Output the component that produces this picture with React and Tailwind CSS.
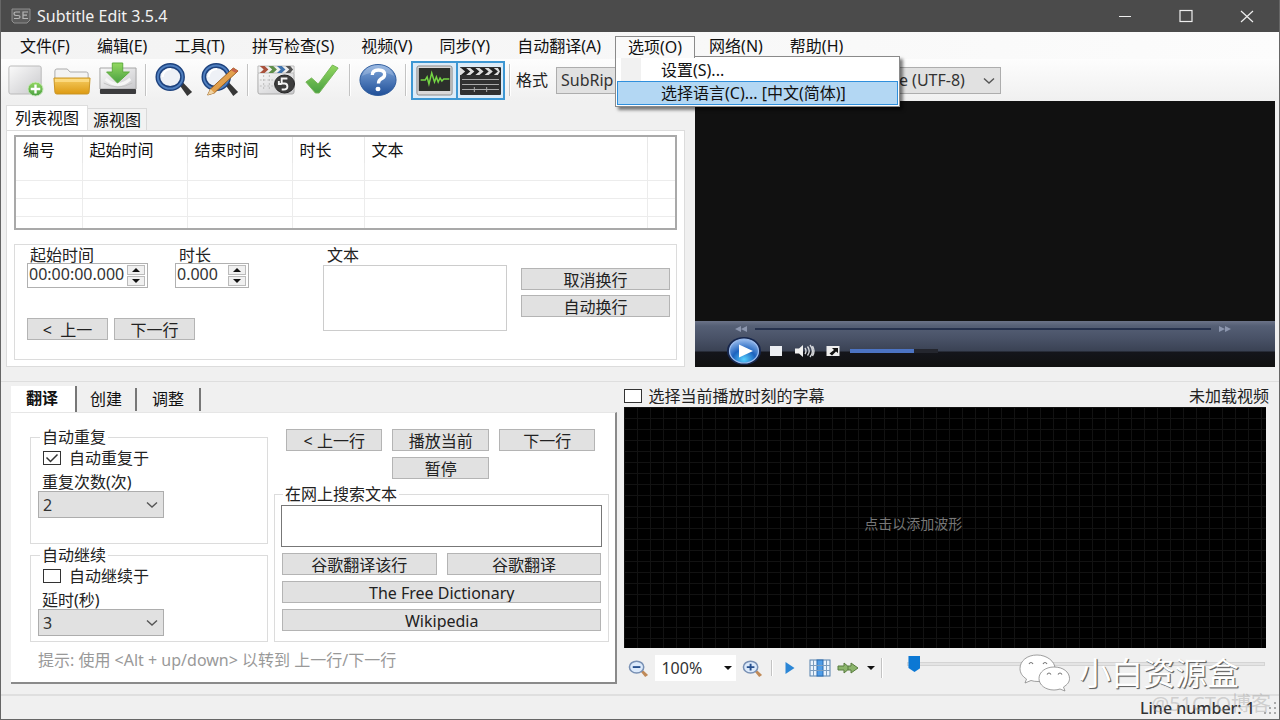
import React, { useState } from 'react';

const menus = ['文件(F)', '编辑(E)', '工具(T)', '拼写检查(S)', '视频(V)', '同步(Y)', '自动翻译(A)', '选项(O)', '网络(N)', '帮助(H)'];

const Gradients = () => (
    <svg className="absolute w-0 h-0" aria-hidden="true">
        <defs>
            <linearGradient id="paper" x1="0" y1="0" x2="1" y2="1">
                <stop offset="0" stopColor="#fafafa" />
                <stop offset="1" stopColor="#c9c9cc" />
            </linearGradient>
            <linearGradient id="gold" x1="0" y1="0" x2="0" y2="1">
                <stop offset="0" stopColor="#f6cd62" />
                <stop offset="1" stopColor="#dd9a12" />
            </linearGradient>
            <linearGradient id="green" x1="0" y1="0" x2="0" y2="1">
                <stop offset="0" stopColor="#93d860" />
                <stop offset="1" stopColor="#4aa042" />
            </linearGradient>
            <linearGradient id="blue" x1="0" y1="0" x2="0" y2="1">
                <stop offset="0" stopColor="#84aadd" />
                <stop offset="1" stopColor="#1f4f98" />
            </linearGradient>
            <radialGradient id="orb" cx="0.5" cy="0.85" r="0.8">
                <stop offset="0" stopColor="#56d0ff" />
                <stop offset="0.5" stopColor="#1c62be" />
                <stop offset="1" stopColor="#8fb4e8" />
            </radialGradient>
        </defs>
    </svg>
);

const Svg = ({ children, box = '0 0 40 36', className = 'w-full h-9' }) => (
    <svg viewBox={box} className={className} preserveAspectRatio="none" aria-hidden="true">{children}</svg>
);

const NewIcon = () => (
    <Svg>
        <rect x="2" y="4" width="34" height="28" rx="2" fill="url(#paper)" stroke="#b9b9b9" />
        <ellipse cx="30" cy="27" rx="8" ry="7" fill="url(#green)" stroke="#cfe8c4" />
        <path d="M30 22.500v9M25 27h10" stroke="#fff" strokeWidth="2.500" />
    </Svg>
);

const OpenIcon = () => (
    <Svg>
        <path d="M2 15V9q0-2 2-2h11l3 3h17q2 0 2 2v8H2z" fill="#f3f3f3" stroke="#aaa" />
        <path d="M1 16h38l-1 14q0 2-2 2H4q-2 0-2-2z" fill="url(#gold)" stroke="#c99424" />
        <path d="M2 17h36v3H2z" fill="#ffe391" opacity="0.7" />
    </Svg>
);

const SaveIcon = () => (
    <Svg>
        <path d="M1 6h38v21H1z" fill="url(#paper)" stroke="#a5a5a5" />
        <path d="M7 17q13 11 26 0" fill="none" stroke="#f6f6f6" strokeWidth="3" />
        <path d="M5 21q15 8 30 0" fill="none" stroke="#c2c2c2" />
        <rect x="1" y="27" width="38" height="5" rx="1" fill="#3c3c3e" />
        <path d="M14 1h11v9h7L19.500 21 8 10h6z" fill="url(#green)" stroke="#5cab3c" />
    </Svg>
);

const Lens = () => (
    <>
        <path d="M25 22l4-2 10 10-5 4z" fill="#373737" />
        <ellipse cx="16" cy="15" rx="13" ry="11.500" fill="#eef1f6" stroke="#1d427e" strokeWidth="5" />
        <ellipse cx="16" cy="15" rx="13" ry="11.500" fill="none" stroke="#4f7fbf" strokeWidth="2" />
        <path d="M8 15q1-8 9-8" fill="none" stroke="#fff" strokeWidth="2" />
    </>
);

const FindIcon = () => <Svg><Lens /></Svg>;

const ReplaceIcon = () => (
    <Svg>
        <Lens />
        <path d="M10 27L34 6l5 3-25 22-7 2z" fill="#e2a04c" stroke="#9b6220" />
        <path d="M34 6l5 3-2.500 2-5-3z" fill="#c8634a" />
        <path d="M7 33l3-6 4 4z" fill="#f0d4a5" />
    </Svg>
);

const SyncIcon = () => (
    <Svg>
        <rect x="1" y="10" width="38" height="22" rx="2" fill="url(#paper)" stroke="#aaa" />
        <path d="M1 4h38v7H1z" fill="#f0f0f0" stroke="#bbb" />
        <path d="M3 4h5l4 3.500L8 11H3l4-3.500z" fill="#a9513b" />
        <path d="M12 4h5l4 3.500-4 3.500h-5l4-3.500z" fill="#5f8f4a" />
        <path d="M21 4h5l4 3.500-4 3.500h-5l4-3.500z" fill="#3f73ae" />
        <path d="M30 4h5l3 3.500-3 3.500h-5l4-3.500z" fill="#555" />
        <path d="M7 13v16M13 13v16M3 18h17M3 24h15" stroke="#bdbdbd" strokeDasharray="2 2" />
        <ellipse cx="29" cy="22" rx="10.500" ry="9" fill="#3d3d3d" stroke="#222" />
        <path d="M32 16.500h-6v5h3q3 0 3 3t-4 3h-2M23 19v3h3" fill="none" stroke="#f4f4f4" strokeWidth="2" />
    </Svg>
);

const CheckIcon = () => (
    <Svg>
        <path d="M3 20l6-4 7 6L31 3l6 3-20 25h-4z" fill="url(#green)" stroke="#74b555" />
    </Svg>
);

const HelpIcon = () => (
    <Svg>
        <ellipse cx="20" cy="18" rx="19" ry="15.500" fill="url(#blue)" stroke="#2e5c9c" />
        <path d="M3 14q4-11 17-11t17 11q-16-8-34 0z" fill="#fff" opacity="0.2" />
        <path d="M14 13q0-5 6.500-5t6.500 4.500q0 3-4 4.500-2.500 1.500-2.500 4.500" fill="none" stroke="#fff" strokeWidth="3.500" />
        <ellipse cx="20" cy="27" rx="2.600" ry="2.200" fill="#fff" />
    </Svg>
);

const WaveIcon = () => (
    <Svg>
        <rect x="1" y="3" width="38" height="29" rx="2" fill="#d9d9d9" stroke="#888" />
        <rect x="3" y="5" width="34" height="23" fill="#2c2f2b" />
        <path d="M5 17h5l2-3 2 7 3-11 3 9 2-5 2 5 2-4 2 3 2-2h6" fill="none" stroke="#74d644" strokeWidth="1.600" />
    </Svg>
);

const ClapIcon = () => (
    <Svg>
        <rect x="0" y="4" width="40" height="28" rx="1" fill="#303030" />
        <path d="M0 5h40v7H0z" fill="#dedede" />
        <path d="M1 5h5l4 3.500L6 12H1l4-3.500zM10 5h5l4 3.500-4 3.500h-5l4-3.500zM19 5h5l4 3.500-4 3.500h-5l4-3.500zM28 5h5l4 3.500-4 3.500h-5l4-3.500zM37 5h3v7h-3l2-3.500z" fill="#222" />
        <path d="M2 16.500h36M2 21.500h36M2 26.500h36" stroke="#a9a9a9" strokeWidth="1.200" />
        <path d="M14 24v5M26 24v5" stroke="#a9a9a9" />
    </Svg>
);

const ZoomIcon = ({ plus }) => (
    <Svg box="0 0 22 18" className="w-[21px] h-[17px]">
        <path d="M13 12l3-1 5 5-3 2z" fill="#c08a58" />
        <ellipse cx="9" cy="7.500" rx="7.500" ry="6.300" fill="#dceafb" stroke="#7890b4" strokeWidth="1.600" />
        <path d={plus ? 'M5 7.500h8M9 4v7' : 'M5 7.500h8'} stroke="#27508e" strokeWidth="2" />
    </Svg>
);

const Sep = ({ className = 'h-8' }) => <span className={`w-0.5 border-l border-[#c3c3c3] bg-white ${className}`} />;

const Tool = ({ label, children }) => (
    <button type="button" aria-label={label} className="w-[38px]">{children}</button>
);

const Btn = ({ children, className = '' }) => (
    <button type="button" className={`h-[22px] border border-[#b4b4b4] bg-[#e1e1e1] pt-0.5 overflow-hidden leading-[18px] whitespace-nowrap ${className}`}>
        {children}
    </button>
);

const Select = ({ id, label, value, className = '' }) => (
    <div className={`relative h-[27px] ${className}`}>
        <select id={id} aria-label={label} defaultValue={value} className="appearance-none w-full h-full pl-1 border border-[#adadad] bg-[#e1e1e1] text-[#333] leading-6">
            <option>{value}</option>
        </select>
        <svg viewBox="0 0 12 8" className="absolute right-1.5 top-2.5 w-3 h-2 pointer-events-none" aria-hidden="true">
            <path d="M1 1.500l5 4.500 5-4.500" fill="none" stroke="#555" strokeWidth="1.400" />
        </svg>
    </div>
);

const Check = ({ label, checked, onChange, gap = 'gap-2' }) => (
    <label className={`flex items-center h-5 leading-5 ${gap}`}>
        <span className="relative flex">
            <input type="checkbox" checked={checked} onChange={onChange} className="appearance-none w-[18px] h-3.5 border border-[#333] bg-white" />
            {checked && (
                <svg viewBox="0 0 18 14" className="absolute inset-0 w-[18px] h-3.5 pointer-events-none" aria-hidden="true">
                    <path d="M3.500 6.500l4 4 7-7" fill="none" stroke="#333" strokeWidth="1.500" />
                </svg>
            )}
        </span>
        {label}
    </label>
);

const Spinner = ({ id, value, className }) => (
    <div className={`flex h-[25px] border border-[#b0b0b0] bg-white p-px ${className}`}>
        <input id={id} defaultValue={value} className="min-w-0 flex-1 leading-5 pb-1 text-[#333] outline-none" />
        <div className="flex flex-col w-[18px] mr-px gap-px">
            {['up', 'down'].map((dir) => (
                <button key={dir} type="button" aria-label={dir} className="flex-1 flex items-center justify-center border border-[#bbb] bg-[#f0f0f0]">
                    <svg viewBox="0 0 8 4" className="w-2 h-1" aria-hidden="true">
                        <path d={dir === 'up' ? 'M0 4l4-4 4 4z' : 'M0 0l4 4 4-4z'} fill="#111" />
                    </svg>
                </button>
            ))}
        </div>
    </div>
);

const TitleBar = () => (
    <header className="flex items-center h-8 bg-[#4b4b4b] text-[#f2f2f2] pl-2.5 pr-0.5">
        <svg viewBox="0 0 20 16" className="w-5 h-4 mr-1.5" aria-hidden="true">
            <path d="M1 1h18v11l-3 3H3l-2-2z" fill="#5c5c5c" stroke="#8f8f8f" />
            <path d="M9 4H5q-2 0-2 1.700T5 7.500h2Q9 7.500 9 9t-2 1.500H3M17 4h-5v6.500h5M12 7.200h4" fill="none" stroke="#b5b5b5" strokeWidth="1.200" />
        </svg>
        <h1 className="flex-1">Subtitle Edit 3.5.4</h1>
        <button type="button" aria-label="最小化" className="w-[61px] flex justify-center">
            <svg viewBox="0 0 14 14" className="w-3.5 h-3.5"><path d="M1 7.500h12" stroke="#eee" /></svg>
        </button>
        <button type="button" aria-label="最大化" className="w-[61px] flex justify-center">
            <svg viewBox="0 0 14 14" className="w-3.5 h-3.5"><rect x="1" y="1.500" width="12" height="11" fill="none" stroke="#eee" strokeWidth="1.200" /></svg>
        </button>
        <button type="button" aria-label="关闭" className="w-[61px] flex justify-center">
            <svg viewBox="0 0 14 14" className="w-3.5 h-3.5"><path d="M1 2l12 11M13 2L1 13" stroke="#eee" strokeWidth="1.200" /></svg>
        </button>
    </header>
);

const MenuBar = () => (
    <nav className="flex gap-px h-[27px] pt-[3px] pl-1.5 bg-gradient-to-r from-[#f3f3f3] to-[#fcfcfc]">
        {menus.map((m) =>
            m.startsWith('选项') ? (
                <div key={m} className="relative">
                    <button type="button" className="relative z-20 h-[22px] px-3 border border-b-0 border-[#8a8a8a] bg-[#fafafa] leading-[18px]">{m}</button>
                    <ul className="absolute z-10 left-0 top-[21px] w-[285px] border border-[#8a8a8a] bg-white p-px shadow-[3px_3px_3px_rgba(0,0,0,0.5)]">
                        <li className="flex">
                            <span className="w-5 ml-1 bg-[#f1f1f1]" />
                            <button type="button" className="pl-5 h-[23px] leading-[22px]">设置(S)...</button>
                        </li>
                        <li>
                            <button type="button" className="w-full h-6 pl-[43px] text-left leading-5 border border-[#2f8fdc] bg-[#b3d7f3]">选择语言(C)... [中文(简体)]</button>
                        </li>
                    </ul>
                </div>
            ) : (
                <button key={m} type="button" className="h-[22px] px-[13px] leading-5">{m}</button>
            )
        )}
    </nav>
);

const Toolbar = () => (
    <div className="flex items-center gap-2 h-[42px] pl-1.5 bg-gradient-to-b from-[#fdfdfd] to-[#f0f0f0]">
        <Tool label="新建"><NewIcon /></Tool>
        <Tool label="打开"><OpenIcon /></Tool>
        <Tool label="保存"><SaveIcon /></Tool>
        <Sep />
        <Tool label="查找"><FindIcon /></Tool>
        <Tool label="替换"><ReplaceIcon /></Tool>
        <Sep />
        <Tool label="可视同步"><SyncIcon /></Tool>
        <Tool label="拼写检查"><CheckIcon /></Tool>
        <Sep />
        <Tool label="帮助"><HelpIcon /></Tool>
        <div className="flex items-center gap-1">
            <Sep />
            <div className="flex">
                <button type="button" aria-label="波形" aria-pressed="true" className="w-[47px] h-[39px] px-[3px] border-2 border-[#3d97d3] bg-[#dcebf7]"><WaveIcon /></button>
                <button type="button" aria-label="视频" aria-pressed="true" className="w-[47px] h-[39px] px-0.5 border-2 border-l-0 border-[#3d97d3] bg-[#dcebf7]"><ClapIcon /></button>
            </div>
            <Sep />
            <label htmlFor="format" className="pl-px text-[#222]">格式</label>
        </div>
        <Select id="format" label="格式" value="SubRip (.srt)" className="w-[180px]" />
        <Select id="encoding" label="编码" value="Unicode (UTF-8)" className="w-[160px] ml-[97px]" />
    </div>
);

const ListView = () => (
    <section className="flex flex-col pt-1">
        <div className="flex items-end" role="tablist">
            <button type="button" role="tab" aria-selected="true" className="h-[25px] px-2 bg-white border border-b-0 border-[#ddd] leading-5">列表视图</button>
            <button type="button" role="tab" className="h-[22px] px-[5px] bg-[#f2f2f2] border border-l-0 border-b-0 border-[#d9d9d9] leading-[18px]">源视图</button>
        </div>
        <div className="flex-1 flex flex-col bg-white border border-[#dcdcdc] px-[7px] pt-1 pb-1.5">
            <div className="border-2 border-[#a9a9a9]">
                <table className="w-full table-fixed border-collapse text-left">
                    <colgroup>
                        <col className="w-[66px]" />
                        <col className="w-[105px]" />
                        <col className="w-[105px]" />
                        <col className="w-[72px]" />
                        <col />
                        <col className="w-[28px]" />
                    </colgroup>
                    <thead>
                        <tr className="h-[26px]">
                            {['编号', '起始时间', '结束时间', '时长', '文本', ''].map((h, i) => (
                                <th key={i} className="font-normal px-[7px] py-0 border-r border-[#e8e8e8] last:border-r-0">{h}</th>
                            ))}
                        </tr>
                    </thead>
                    <tbody>
                        {['h-[17px]', 'h-[18px]', 'h-[18px]', 'h-3'].map((h, r) => (
                            <tr key={r} className={`${h} border-b border-[#ececec] last:border-b-0`}>
                                {[0, 1, 2, 3, 4, 5].map((c) => (
                                    <td key={c} className="p-0 border-r border-[#ececec] last:border-r-0" />
                                ))}
                            </tr>
                        ))}
                    </tbody>
                </table>
            </div>
            <div className="flex-1 flex justify-between mt-3.5 border border-[#dcdcdc] pl-3 pr-1.5 pt-0.5 text-[#222]">
                <div className="flex flex-col">
                    <div className="flex gap-[27px]">
                        <div>
                            <label htmlFor="start" className="block leading-4 pl-[3px]">起始时间</label>
                            <Spinner id="start" value="00:00:00.000" className="w-[121px]" />
                        </div>
                        <div>
                            <label htmlFor="duration" className="block leading-4 pl-1">时长</label>
                            <Spinner id="duration" value="0.000" className="w-[74px]" />
                        </div>
                    </div>
                    <div className="flex gap-1.5 mt-[30px]">
                        <Btn className="w-[81px]">&lt;&nbsp; 上一</Btn>
                        <Btn className="w-[81px]">下一行</Btn>
                    </div>
                </div>
                <div className="flex gap-3.5">
                    <div>
                        <label htmlFor="text" className="block leading-4 pl-1">文本</label>
                        <textarea id="text" className="block w-[184px] h-[66px] mt-0.5 border border-[#ccc] resize-none" />
                    </div>
                    <div className="flex flex-col gap-[5px] pt-[21px]">
                        <Btn className="w-[149px]">取消换行</Btn>
                        <Btn className="w-[149px]">自动换行</Btn>
                    </div>
                </div>
            </div>
        </div>
    </section>
);

const Player = () => (
    <section className="flex flex-col bg-[#111]">
        <div className="flex-1" />
        <div className="h-[46px] bg-[linear-gradient(#6b7388_0px,#555f75_5px,#485166_18px,#3a4254_30px,#14151b_31px,#111_45px)]">
            <div className="flex items-center gap-2 pl-10 pr-11 h-[15px]">
                <button type="button" aria-label="快退">
                    <svg viewBox="0 0 12 6" className="w-3 h-1.5"><path d="M6 0v6L0 3zM12 0v6L6 3z" fill="#8c96ae" /></svg>
                </button>
                <div className="flex-1 h-0.5 bg-[#26314d]" />
                <button type="button" aria-label="快进">
                    <svg viewBox="0 0 12 6" className="w-3 h-1.5"><path d="M0 0v6l6-3zM6 0v6l6-3z" fill="#8c96ae" /></svg>
                </button>
            </div>
            <div className="flex items-center h-[30px] pl-[31px]">
                <button type="button" aria-label="播放">
                    <svg viewBox="0 0 36 30" className="w-9 h-[30px]">
                        <ellipse cx="18" cy="15" rx="17" ry="14" fill="#16264d" />
                        <ellipse cx="18" cy="15" rx="14.500" ry="12" fill="url(#orb)" stroke="#9cbdf0" strokeWidth="1.200" />
                        <path d="M13 8.500l14 6.500-14 6.500z" fill="#fff" />
                    </svg>
                </button>
                <button type="button" aria-label="停止" className="w-3 h-2.5 ml-2 bg-[#eceef2]" />
                <button type="button" aria-label="静音" className="ml-3">
                    <svg viewBox="0 0 22 16" className="w-[22px] h-4">
                        <path d="M1 5.500h4L9 2v12L5 10.500H1z" fill="#f0f0f0" />
                        <path d="M11 5q2 3 0 6M13.500 3.500q3.500 4.500 0 9M16 2q5 6 0 12M18.500 3q3 5 0 10" fill="none" stroke="#d5d7db" strokeWidth="1.400" />
                    </svg>
                </button>
                <button type="button" aria-label="全屏" className="ml-2.5">
                    <svg viewBox="0 0 14 12" className="w-3.5 h-3">
                        <rect x="0.500" y="1" width="13" height="10" fill="#eee" />
                        <path d="M6 3h6v5l-2-1.500-4 4-2.500-2L8 5z" fill="#111" />
                    </svg>
                </button>
                <div className="flex ml-2.5 h-1 w-[88px] bg-[#24262e]">
                    <div className="w-[73%] bg-[#4c74c4]" />
                </div>
            </div>
        </div>
    </section>
);

const TranslatePanel = () => {
    const [repeat, setRepeat] = useState(true);
    const [cont, setCont] = useState(false);

    return (
        <section className="flex flex-col">
            <div className="flex h-[26px]" role="tablist">
                <button type="button" role="tab" aria-selected="true" className="w-[66px] pr-0.5 pb-0.5 bg-white border-r-2 border-[#777] font-bold leading-5">翻译</button>
                <button type="button" role="tab" className="w-[60px] mt-0.5 mb-px pb-0.5 border-r-2 border-[#777] leading-5">创建</button>
                <button type="button" role="tab" className="w-[64px] mt-0.5 mb-px pb-0.5 border-r-2 border-[#777] leading-5">调整</button>
            </div>
            <div className="flex-1 bg-white border-t border-t-[#e6e6e6] border-r-2 border-b-2 border-r-[#8a8a8a] border-b-[#8a8a8a] pl-[19px] pr-1.5 pt-4 text-[#222]">
                <div className="flex gap-1.5">
                    <div className="w-[238px] flex flex-col gap-[3px]">
                        <fieldset className="border border-[#dcdcdc] pl-[7px] pb-[25px]">
                            <legend className="ml-0.5 px-0.5 leading-4">自动重复</legend>
                            <div className="pl-[5px] pt-[3px]">
                                <Check label="自动重复于" checked={repeat} onChange={() => setRepeat(!repeat)} />
                            </div>
                            <label htmlFor="count" className="block mt-1.5 pl-1 leading-[17px]">重复次数(次)</label>
                            <Select id="count" label="重复次数(次)" value="2" className="w-[126px]" />
                        </fieldset>
                        <fieldset className="border border-[#dcdcdc] pl-[7px] pb-[5px]">
                            <legend className="ml-0.5 px-0.5 leading-4">自动继续</legend>
                            <div className="pl-[5px] pt-[3px]">
                                <Check label="自动继续于" checked={cont} onChange={() => setCont(!cont)} />
                            </div>
                            <label htmlFor="delay" className="block mt-1.5 pl-1 leading-[17px]">延时(秒)</label>
                            <Select id="delay" label="延时(秒)" value="3" className="w-[126px]" />
                        </fieldset>
                    </div>
                    <div className="flex-1 flex flex-col">
                        <div className="grid grid-cols-3 gap-x-2.5 gap-y-1.5 pl-3 pr-3.5">
                            <Btn>&lt; 上一行</Btn>
                            <Btn>播放当前</Btn>
                            <Btn>下一行</Btn>
                            <Btn className="col-start-2">暂停</Btn>
                        </div>
                        <fieldset className="flex-1 mt-[7px] border border-[#dcdcdc] px-1.5">
                            <legend className="ml-0.5 px-0.5 leading-4">在网上搜索文本</legend>
                            <textarea aria-label="在网上搜索文本" className="block w-full h-[42px] mt-[3px] border border-[#777] resize-none" />
                            <div className="grid grid-cols-2 gap-x-2.5 gap-y-1.5 mt-1.5 px-px">
                                <Btn>谷歌翻译该行</Btn>
                                <Btn>谷歌翻译</Btn>
                                <Btn className="col-span-2">The Free Dictionary</Btn>
                                <Btn className="col-span-2">Wikipedia</Btn>
                            </div>
                        </fieldset>
                    </div>
                </div>
                <p className="pl-2 pt-2 leading-5 text-[#999]">提示: 使用 &lt;Alt + up/down&gt; 以转到 上一行/下一行</p>
            </div>
        </section>
    );
};

const Waveform = () => {
    const [follow, setFollow] = useState(false);

    return (
        <section className="flex flex-col text-[#222]">
            <div className="flex justify-between items-start h-[21px] pr-1">
                <Check label="选择当前播放时刻的字幕" checked={follow} onChange={() => setFollow(!follow)} gap="gap-1.5" />
                <span className="leading-5">未加载视频</span>
            </div>
            <button
                type="button"
                className="flex-1 mr-[7px] pr-16 pb-2 bg-black bg-[linear-gradient(to_right,#121212_1px,transparent_1px),linear-gradient(#121212_1px,transparent_1px)] bg-[size:13px_11px] text-sm text-[#777]"
            >
                点击以添加波形
            </button>
            <div className="flex items-center h-9 pt-1 pl-1">
                <button type="button" aria-label="缩小"><ZoomIcon /></button>
                <div className="relative ml-1.5 w-[81px] h-[26px]">
                    <select aria-label="缩放" defaultValue="100%" className="appearance-none w-full h-full pl-1.5 bg-white text-[#333]">
                        <option>100%</option>
                    </select>
                    <svg viewBox="0 0 8 4" className="absolute right-1 top-[11px] w-2 h-1 pointer-events-none"><path d="M0 0l4 4 4-4z" fill="#111" /></svg>
                </div>
                <button type="button" aria-label="放大" className="ml-1.5"><ZoomIcon plus /></button>
                <Sep className="h-4 ml-2" />
                <button type="button" aria-label="播放" className="ml-3">
                    <svg viewBox="0 0 10 14" className="w-2.5 h-3.5"><path d="M0.500 1l9 6-9 6z" fill="#2b86d6" /></svg>
                </button>
                <button type="button" aria-label="网格" className="ml-3.5">
                    <Svg box="0 0 22 18" className="w-[22px] h-[18px]">
                        <rect x="1" y="1" width="20" height="16" fill="#eaf3fc" stroke="#5580ac" />
                        <rect x="8" y="1" width="6" height="16" fill="#4f9de8" stroke="#2d6db0" />
                        <path d="M1 6.500h20M1 11.500h20M4.500 1v16M17.500 1v16" stroke="#7d9dbd" />
                    </Svg>
                </button>
                <button type="button" aria-label="自动滚动" className="ml-1.5 flex items-center gap-2">
                    <Svg box="0 0 22 14" className="w-[22px] h-3.5">
                        <path d="M1 5h6V2l6 5-6 5V9H1z" fill="#8cb56c" stroke="#587c3e" />
                        <path d="M11 5h3V2l7 5-7 5V9h-3z" fill="#8cb56c" stroke="#587c3e" />
                    </Svg>
                    <svg viewBox="0 0 8 4" className="w-2 h-1"><path d="M0 0l4 4 4-4z" fill="#111" /></svg>
                </button>
                <Sep className="h-5 ml-1.5" />
                <input
                    type="range"
                    aria-label="播放位置"
                    defaultValue="0"
                    className="appearance-none flex-1 ml-6 mr-2 mb-2 h-1 bg-[#e4e4e4] border border-[#d4d4d4] [&::-webkit-slider-thumb]:appearance-none [&::-webkit-slider-thumb]:w-3 [&::-webkit-slider-thumb]:h-4 [&::-webkit-slider-thumb]:bg-[#0c78d4] [&::-webkit-slider-thumb]:[clip-path:polygon(0_0,100%_0,100%_75%,50%_100%,0_75%)]"
                />
            </div>
        </section>
    );
};

const StatusBar = () => (
    <footer className="relative flex justify-end h-[25px] border-t-2 border-[#dfdfdf] pr-0.5 text-[#333]">
        <span className="leading-6 pr-2 font-medium">Line number: 1</span>
        <svg viewBox="0 0 14 14" className="w-3.5 h-3.5 self-end mb-1" aria-hidden="true">
            <path d="M11 1h2v2h-2zM6 6h2v2H6zM11 6h2v2h-2zM1 11h2v2H1zM6 11h2v2H6zM11 11h2v2h-2z" fill="#aaa" />
        </svg>
        <span className="absolute right-2 -top-1 text-xl leading-6 text-[#9996] pointer-events-none">@51CTO博客</span>
        <div className="absolute right-10 bottom-[26px] flex items-center gap-2 pointer-events-none">
            <svg viewBox="0 0 52 38" className="w-[52px] h-[38px]" aria-hidden="true">
                <path d="M18 1C8 1 1 7 1 14.500c0 4.500 2.500 8 6.500 10.500L6 29l6-2.500q3 1 7 1c10 0 17-6 17-13S28 1 18 1z" fill="#fff" stroke="#888" strokeWidth="0.800" />
                <path d="M35 13c-8.500 0-15 5-15 11.500S26.500 36 35 36q3 0 6-1l5 2-1.500-4c4-2.500 6-5 6-8.500C50.500 18 44 13 35 13z" fill="#fff" stroke="#888" strokeWidth="0.800" />
                <path d="M10 10q2-3 4 0M24 10q2-3 4 0M28 20.500q2-3 4 0M39 20.500q2-3 4 0" fill="none" stroke="#777" strokeWidth="1.200" />
            </svg>
            <span className="text-[32px] leading-10 text-white [text-shadow:1px_1px_0_#666,1px_1px_1px_#777]">小白资源盒</span>
        </div>
    </footer>
);

export default function App() {
    return (
        <div className="min-h-screen flex flex-col overflow-hidden bg-[#f0f0f0] border border-t-0 border-[#666] text-base text-[#111] font-['Noto_Sans','Noto_Sans_CJK_SC',sans-serif]">
            <Gradients />
            <TitleBar />
            <MenuBar />
            <Toolbar />
            <main className="flex-1 flex flex-col">
                <div className="grid grid-cols-[679fr_580fr] gap-2.5 pl-[5px] pr-1 h-[266px]">
                    <ListView />
                    <Player />
                </div>
                <div className="flex-1 grid grid-cols-[606fr_648fr] gap-[7px] mt-3.5 pt-1 pb-2.5 pl-[10px] pr-1.5 border-t border-[#dedede]">
                    <TranslatePanel />
                    <Waveform />
                </div>
            </main>
            <StatusBar />
        </div>
    );
}
